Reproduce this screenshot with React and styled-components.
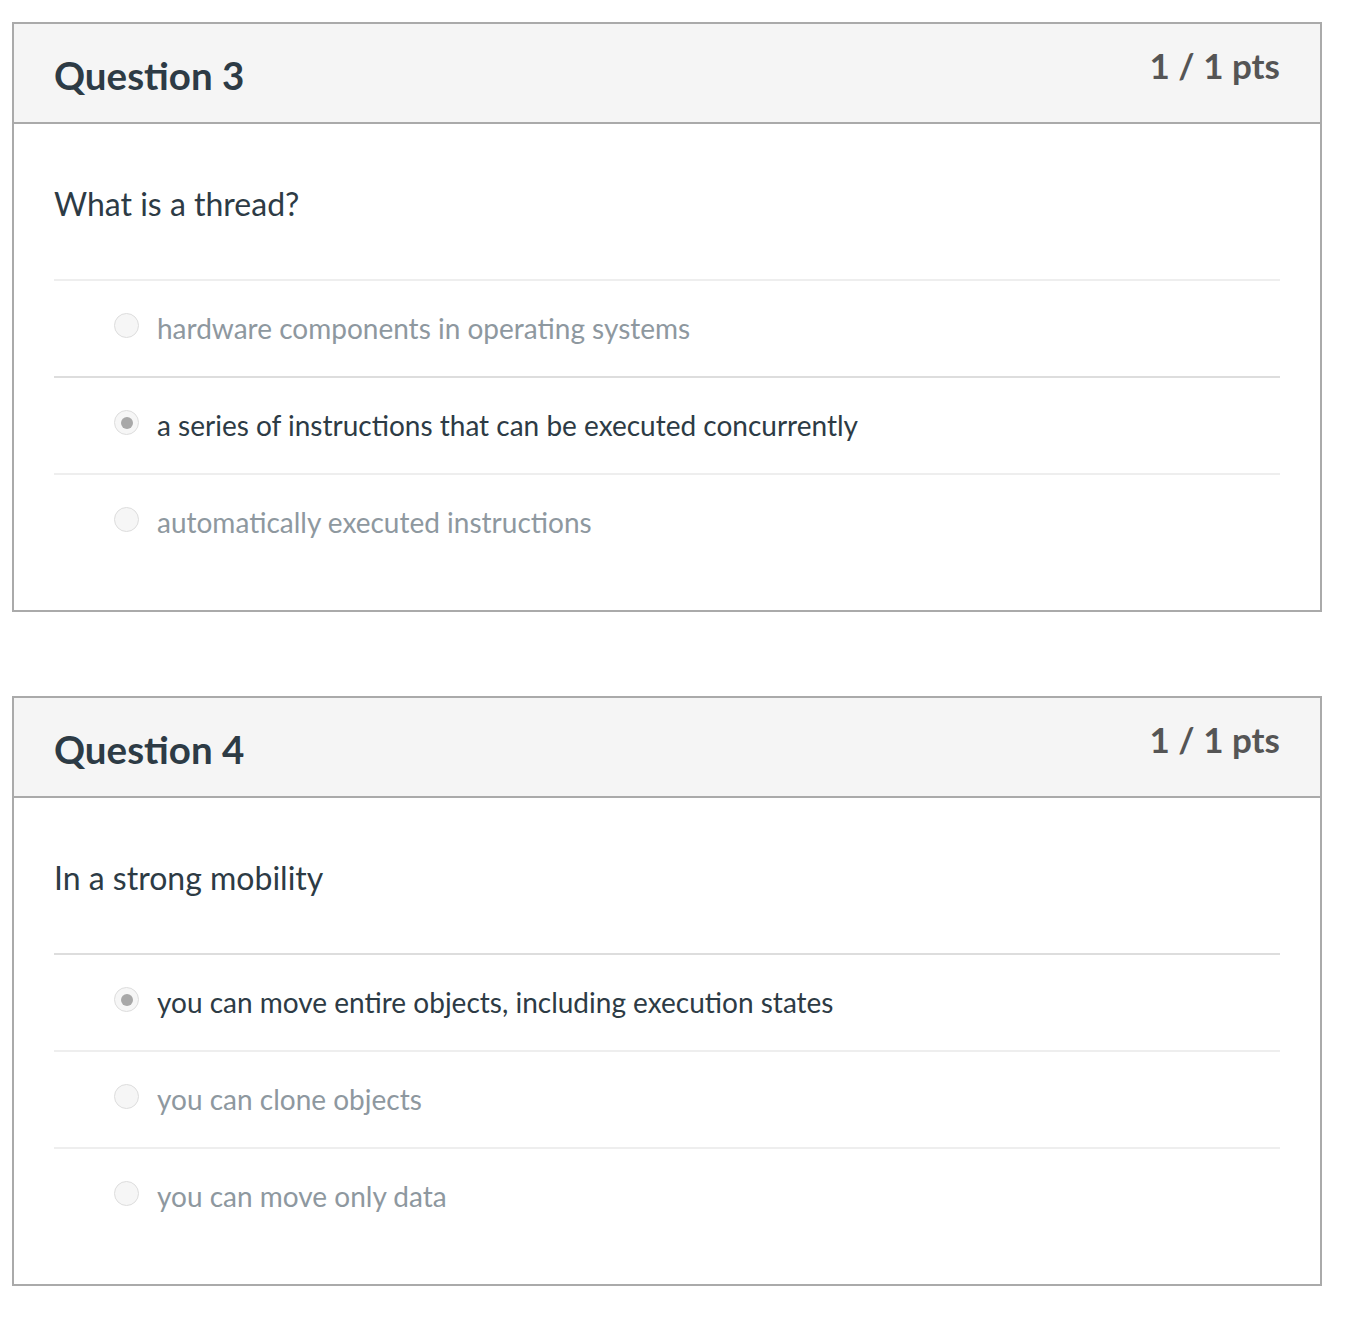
import React from 'react';
import styled, { createGlobalStyle } from 'styled-components';

const GlobalStyle = createGlobalStyle`
  body {
    margin: 0;
    background: #fff;
    font-family: Lato, "Open Sans", "Liberation Sans", sans-serif;
  }
`;

const Page = styled.div`
  display: flex;
  flex-direction: column;
  gap: 84px;
  padding: 22px 0 48px 12px;
  width: 1310px;
`;

const Card = styled.section`
  border: 2px solid #aaaaaa;
  background: #fff;
`;

const Header = styled.header`
  display: flex;
  justify-content: space-between;
  height: 98px;
  padding: 0 40px;
  background: #f5f5f5;
  border-bottom: 2px solid #aaaaaa;
`;

const Title = styled.h2`
  margin: 4px 0 0;
  align-self: center;
  font-size: 38.5px;
  line-height: 1;
  font-weight: 700;
  color: #2d3b45;
`;

const Points = styled.div`
  margin-top: 24px;
  font-size: 35px;
  line-height: 1;
  font-weight: 700;
  color: #555555;
`;

const Body = styled.div`
  padding: 0 40px 40px;
`;

const QuestionText = styled.p`
  box-sizing: border-box;
  height: 155px;
  margin: 0;
  padding-top: 61px;
  font-size: 32px;
  line-height: 1.2;
  color: #2d3b45;
`;

const Answer = styled.div`
  display: flex;
  align-items: center;
  gap: 18px;
  height: 95px;
  padding-left: 60px;
  border-top: 2px solid ${props => (props.selected ? '#dddddd' : '#eeeeee')};
`;

const Radio = styled.span`
  position: relative;
  flex: none;
  width: 23px;
  height: 23px;
  margin-top: -6px;
  border-radius: 50%;
  border: 1px solid #dddddd;
  background: #f6f6f6;

  &::after {
    content: '';
    display: ${props => (props.checked ? 'block' : 'none')};
    position: absolute;
    left: 5.5px;
    top: 5.5px;
    width: 12px;
    height: 12px;
    border-radius: 50%;
    background: #a8a8a8;
  }
`;

const AnswerText = styled.span`
  font-size: 28px;
  line-height: 1.2;
  color: ${props => (props.selected ? '#2d3b45' : '#8e989f')};
`;

const questions = [
  {
    title: 'Question 3',
    points: '1 / 1 pts',
    text: 'What is a thread?',
    answers: [
      'hardware components in operating systems',
      'a series of instructions that can be executed concurrently',
      'automatically executed instructions'
    ],
    chosen: 1
  },
  {
    title: 'Question 4',
    points: '1 / 1 pts',
    text: 'In a strong mobility',
    answers: [
      'you can move entire objects, including execution states',
      'you can clone objects',
      'you can move only data'
    ],
    chosen: 0
  }
];

function App() {
  return (
    <>
      <GlobalStyle />
      <Page>
        {questions.map(q => (
          <Card key={q.title}>
            <Header>
              <Title>{q.title}</Title>
              <Points>{q.points}</Points>
            </Header>
            <Body>
              <QuestionText>{q.text}</QuestionText>
              {q.answers.map((a, i) => (
                <Answer key={a} selected={i === q.chosen}>
                  <Radio checked={i === q.chosen} />
                  <AnswerText selected={i === q.chosen}>{a}</AnswerText>
                </Answer>
              ))}
            </Body>
          </Card>
        ))}
      </Page>
    </>
  );
}

export default App;
